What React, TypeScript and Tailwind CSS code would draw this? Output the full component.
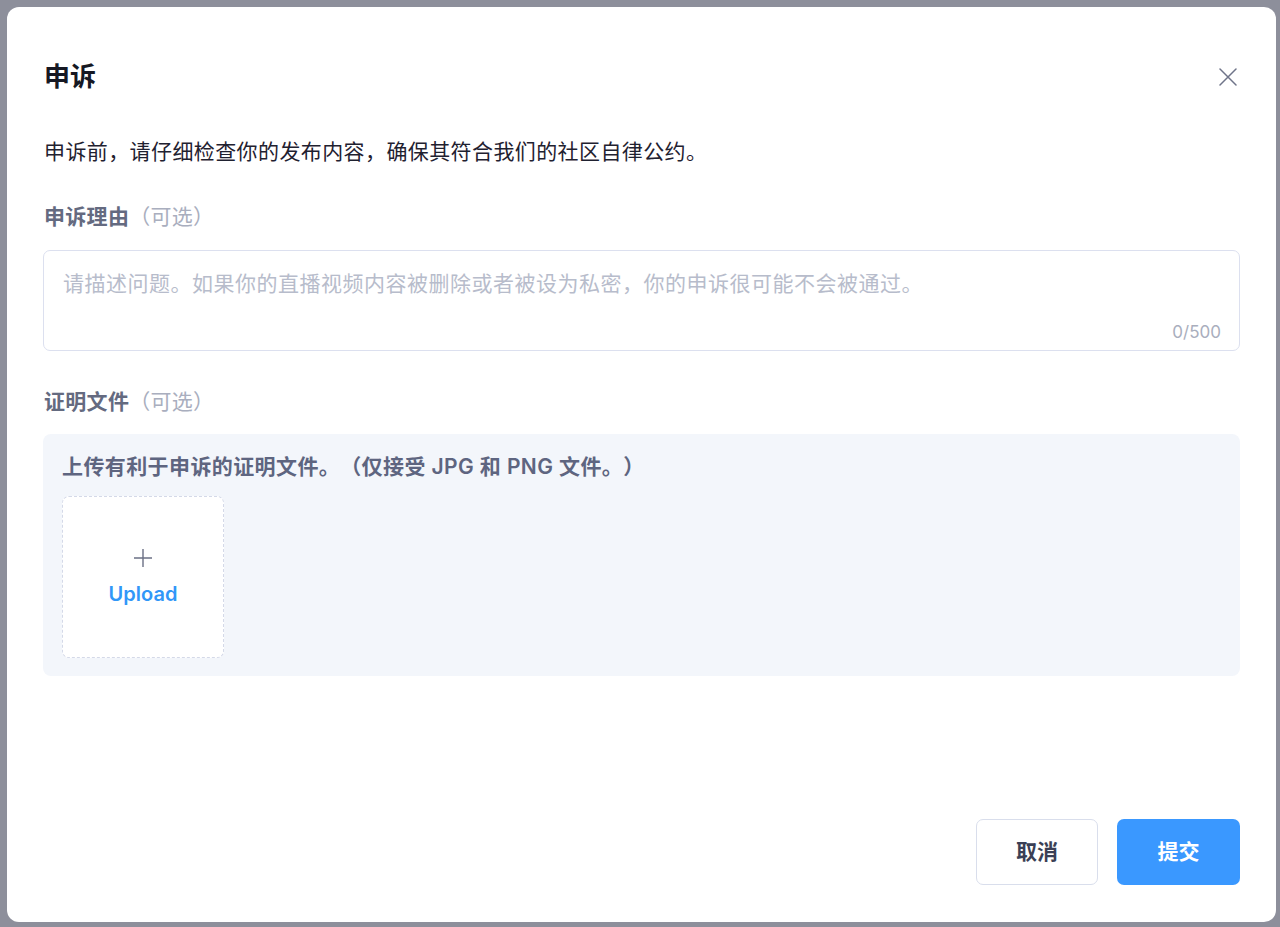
import React from "react";

const FONT = { fontFamily: 'Inter, "Noto Sans CJK SC", "Noto Sans", sans-serif' };

export default function App() {
  return (
    <div
      className="w-[1280px] h-[927px] bg-[#8d8f9b] pt-[7px] pl-[7px] overflow-hidden [text-spacing-trim:space-all]"
      style={FONT}
    >
      <div className="w-[1269px] h-[915px] bg-white rounded-[12px] flex flex-col px-[36px] pt-[52px] pb-[37px]">
        {/* Header */}
        <div className="flex items-center justify-between h-[36px]">
          <h1 className="text-[26px] leading-[36px] font-bold text-[#161823] pl-[1px]">申诉</h1>
          <button className="w-[24px] h-[24px] flex items-center justify-center text-[#6f7489]">
            <svg width="18" height="18" viewBox="0 0 18 18" fill="none" stroke="currentColor" strokeWidth="1.5" strokeLinecap="round">
              <path d="M1 1L17 17M17 1L1 17" />
            </svg>
          </button>
        </div>

        <p className="mt-[42px] text-[21px] leading-[30px] tracking-[0.4px] text-[#1f2130] pl-[1px]">
          申诉前，请仔细检查你的发布内容，确保其符合我们的社区自律公约。
        </p>

        <div className="mt-[35px] text-[21px] leading-[30px] font-semibold text-[#646a80] pl-[1px] tracking-[0.3px]">
          申诉理由<span className="font-normal text-[#a9aebe]">（可选）</span>
        </div>

        <div className="mt-[18px] h-[101px] border border-[#dce0ef] rounded-[7px] flex flex-col pt-[18px] pl-[19px] pr-[18px] pb-[5px]">
          <textarea
            className="w-full h-[51px] resize-none outline-none bg-transparent text-[21px] leading-[30px] tracking-[0.5px] text-[#161823] placeholder:text-[#b7bccb]"
            style={FONT}
            placeholder="请描述问题。如果你的直播视频内容被删除或者被设为私密，你的申诉很可能不会被通过。"
          />
          <div className="text-right text-[17px] leading-[24px] text-[#a9aebd]">0/500</div>
        </div>

        <div className="mt-[36px] text-[21px] leading-[30px] font-semibold text-[#646a80] pl-[1px] tracking-[0.3px]">
          证明文件<span className="font-normal text-[#a9aebe]">（可选）</span>
        </div>

        <div className="mt-[17px] h-[242px] bg-[#f3f6fb] rounded-[8px] pt-[18px] pl-[19px] pb-[18px]">
          <div className="text-[21px] leading-[30px] font-semibold tracking-[0.4px] text-[#5e6580]">
            上传有利于申诉的证明文件。（仅接受 JPG 和 PNG 文件。）
          </div>
          <div className="mt-[14px] w-[162px] h-[162px] bg-white border border-dashed border-[#d4d9e8] rounded-[7px] flex flex-col items-center justify-center">
            <svg width="20" height="20" viewBox="0 0 20 20" fill="none" stroke="#6b7085" strokeWidth="1.4">
              <path d="M10 1V19M1 10H19" />
            </svg>
            <div className="mt-[13px] text-[20px] leading-[26px] font-semibold text-[#3197f8]">Upload</div>
          </div>
        </div>

        <div className="flex-1" />

        <div className="flex justify-end gap-[19px]">
          <button className="w-[122px] h-[66px] border border-[#d9deec] rounded-[7px] bg-white text-[21px] font-bold text-[#3a3f55]">
            取消
          </button>
          <button className="w-[123px] h-[66px] rounded-[7px] bg-[#3a98ff] text-[21px] font-bold text-white">
            提交
          </button>
        </div>
      </div>
    </div>
  );
}
